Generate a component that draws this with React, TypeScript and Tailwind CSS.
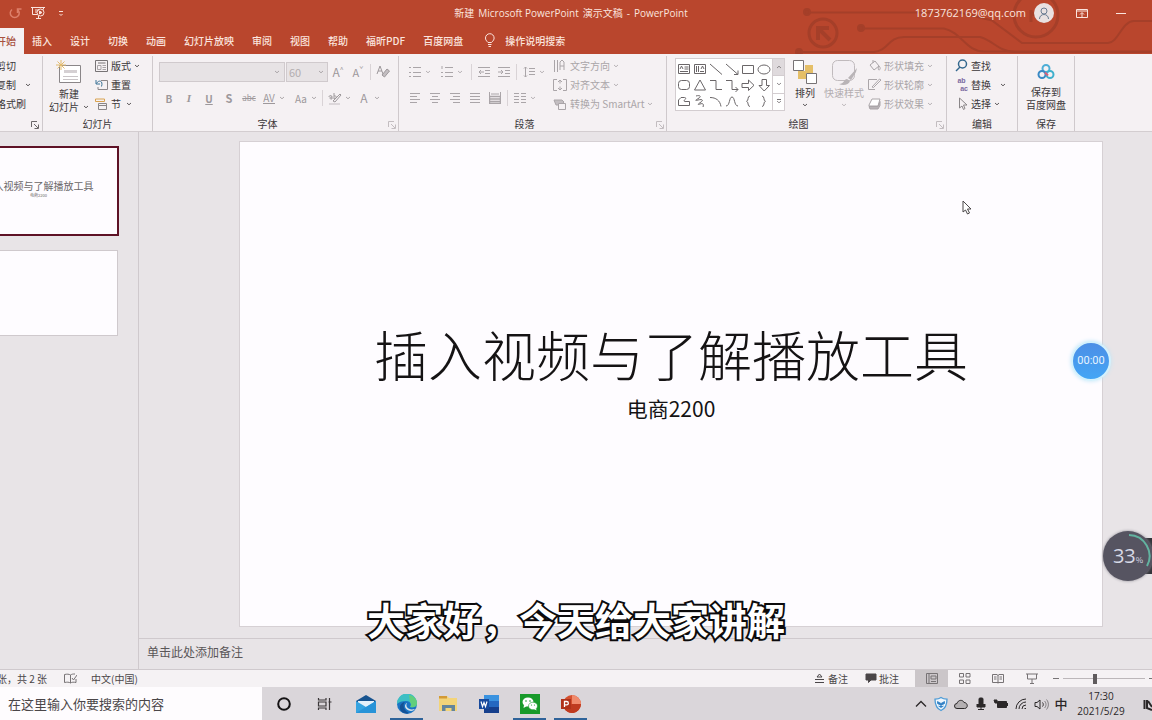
import type { ReactNode } from "react";
import { clsx } from "clsx";

const menuTabs = ["插入", "设计", "切换", "动画", "幻灯片放映", "审阅", "视图", "帮助", "福昕PDF", "百度网盘"];

function Caret({ className }: { className?: string }) {
  return (
    <svg viewBox="0 0 6 4" className={clsx("h-1 w-[6px] shrink-0 opacity-80", className)} fill="none" stroke="currentColor">
      <path d="M1 1l2 1.800L5 1" />
    </svg>
  );
}

type IconProps = { w?: number; h?: number; className?: string; children: ReactNode };

function Icon({ w = 16, h = 16, className, children }: IconProps) {
  return (
    <svg
      width={w}
      height={h}
      viewBox={`0 0 ${w} ${h}`}
      className={clsx("shrink-0", className)}
      fill="none"
      stroke="currentColor"
    >
      {children}
    </svg>
  );
}

type GroupProps = {
  label: string;
  className?: string;
  bodyClassName?: string;
  launcher?: boolean;
  children: ReactNode;
};

function Group({ label, className, bodyClassName, launcher, children }: GroupProps) {
  return (
    <section className={clsx("relative flex shrink-0 flex-col border-r border-[#cfc9cc]", className)}>
      <div className={clsx("flex h-[61px] items-start", bodyClassName)}>{children}</div>
      <h2 className={clsx("h-[14px] text-center text-[10px] leading-[14px] text-[#3b3739]", launcher && "pr-4")}>
        {label}
      </h2>
      {launcher && (
        <button aria-label={`${label}设置`} className="absolute right-[2px] bottom-[2px] text-[#c3bdc0]">
          <Icon w={8} h={8}>
            <path d="M.5 6V.5H6M3 3l4 4M7.500 3.500v4h-4" />
          </Icon>
        </button>
      )}
    </section>
  );
}

type RowProps = { icon?: ReactNode; text: string; caret?: boolean; gap?: string };

function RowButton({ icon, text, caret, gap }: RowProps) {
  return (
    <button className="flex h-[19px] items-center gap-[3px] whitespace-nowrap">
      {icon}
      <span>{text}</span>
      {caret && <Caret className={gap} />}
    </button>
  );
}

function Tool({ label, children }: { label: string; children: ReactNode }) {
  return (
    <button aria-label={label} className="flex h-5 w-5 items-center justify-center">
      {children}
    </button>
  );
}

function Divider() {
  return <span className="mx-[2px] h-4 w-px bg-[#d9d3d6]" />;
}

const alignments = [
  { label: "左对齐", d: "M1 1.500h10M1 4.500h7M1 7.500h10M1 10.500h7" },
  { label: "居中", d: "M1 1.500h10M3 4.500h6M1 7.500h10M3 10.500h6" },
  { label: "右对齐", d: "M1 1.500h10M4 4.500h7M1 7.500h10M4 10.500h7" },
  { label: "两端对齐", d: "M1 1.500h10M1 4.500h10M1 7.500h10M1 10.500h10" },
];

const shapes: { label: string; art: ReactNode }[] = [
  { label: "文本框", art: <path d="M2.500 3.500h11v9h-11zM4 8l1.500-3L7 8M8.500 6h4M8.500 8h4M4 10.500h8" /> },
  { label: "竖排文本框", art: <path d="M2.500 3.500h11v9h-11zM9 8l1.500-3L12 8M4.500 5v6M6.500 5v6M8 10.500h4" /> },
  { label: "直线", art: <path d="M2 3l12 10.500" /> },
  { label: "箭头", art: <path d="M2 3l12 10.500M14 9.500v4h-4" /> },
  { label: "矩形", art: <path d="M2.500 4.500h11v8h-11z" /> },
  { label: "椭圆", art: <ellipse cx="8" cy="8.500" rx="6" ry="4.500" /> },
  { label: "圆角矩形", art: <rect x="2.500" y="3.500" width="11" height="9" rx="3" /> },
  { label: "三角形", art: <path d="M8 3l5.500 10h-11z" /> },
  { label: "肘形连接符", art: <path d="M2 3.500h6v9h6" /> },
  { label: "肘形箭头", art: <path d="M2 3.500h6v9h6M11.500 10l2.500 2.500-2.500 2.500" /> },
  { label: "右箭头", art: <path d="M2 6.500h6.500V3l5.500 5.300-5.500 5.200V10.500H2z" /> },
  { label: "下箭头", art: <path d="M6 2.500h4.500v6H13.500L8.200 14 3 8.500h3z" /> },
  { label: "任意多边形", art: <path d="M2.500 12.500V7L5 4.500h3.500c2 0 1 2 0 2.500-1 1 0 2 1.500 1.500h3.500v4z" /> },
  { label: "自由曲线", art: <path d="M4 3c3-1 6 0 3 2s-5 3-1 2 6 0 3 2-4 3-1 2 4 0 3 3" /> },
  { label: "弧形", art: <path d="M2 4.500c6 0 10 3 11 9" /> },
  { label: "曲线", art: <path d="M2 13c4 0 3-9 6-9s2 9 6 9" /> },
  { label: "左大括号", art: <path d="M10 3C7 3 9 8 6.500 8.300 9 8.500 7 13.500 10 13.500" /> },
  { label: "右大括号", art: <path d="M6 3c3 0 1 5 3.500 5.300C7 8.500 9 13.500 6 13.500" /> },
];

function TitleBar() {
  return (
    <header className="relative bg-[#b9462d] text-[10px] text-[#fbe4de]">
      {/* Circuit decoration */}
      <svg className="absolute top-0 right-0 h-[54px] w-[362px]" fill="none" stroke="#a53f29" strokeWidth="2">
        <circle cx="17" cy="12" r="3" fill="#a53f29" />
        <path d="M20 12.500h150l32 8 30 22.500h86c10 0 14-22 26-22h18" />
        <circle cx="33" cy="33" r="14" strokeWidth="3" />
        <path d="M28 40V28h11M28 28l12 12" strokeWidth="4" />
        <circle cx="71" cy="28" r="3" fill="#a53f29" />
        <path d="M74 28.500h80c18 4 22 23 40 23h168" />
        <circle cx="9" cy="52" r="3" fill="#a53f29" />
        <path d="M12 52h72c14-1 14-15 30-15h76c14 4 18 14 34 15h138" />
        <circle cx="246" cy="15" r="22" strokeWidth="3" />
        <path d="M241 22V10M241 12l12 10" strokeWidth="3" />
      </svg>

      <div className="relative flex h-7 items-center pb-[2px]">
        <div className="flex flex-1 items-center pl-2">
          <button aria-label="恢复" className="text-[#dd7f6a]">
            <Icon w={14} h={14}>
              <path d="M4 3.500a4.500 4.500 0 1 0 5.500 0M9.500 7V3h4" strokeWidth="1.500" />
            </Icon>
          </button>
          <button aria-label="从头开始放映" className="ml-2">
            <Icon>
              <path d="M1 2.500h14M2.500 2.500v7h5M13.500 2.500v2M5 5h4M5 7h2M6 13.500h5M8.500 11v2" />
              <circle cx="10.500" cy="7.500" r="3.500" />
              <path d="M9.500 6v3l2.500-1.500z" fill="currentColor" />
            </Icon>
          </button>
          <button aria-label="自定义快速访问工具栏" className="ml-3">
            <Icon w={6} h={8}>
              <path d="M1 2.500h4M1.500 5L3 6.500 4.500 5" />
            </Icon>
          </button>
        </div>
        <h1 className="flex gap-1 pl-2 font-['Open_Sans','Noto_Sans_CJK_SC',sans-serif]">
          <span>新建</span>
          <span>Microsoft PowerPoint</span>
          <span>演示文稿</span>
          <span>-</span>
          <span>PowerPoint</span>
        </h1>
        <div className="flex flex-1 items-center justify-end pr-[26px]">
          <span className="font-['Open_Sans',sans-serif] text-[11px]">1873762169@qq.com</span>
          <button aria-label="账户" className="ml-2 flex size-5 items-center justify-center rounded-full bg-[#e9e1e1] text-[#6a7c92]">
            <Icon w={14} h={14}>
              <circle cx="7" cy="5" r="3" />
              <path d="M2.500 13c0-6 9-6 9 0" />
            </Icon>
          </button>
          <button aria-label="功能区显示选项" className="ml-[22px]">
            <Icon w={12} h={10}>
              <path d="M.5 1.500h11v8H.5zM.5 3h11M6 9V5M4 6.500L6 4.500l2 2" />
            </Icon>
          </button>
          <button aria-label="最小化" className="ml-7 flex h-4 w-[10px] items-center">
            <span className="h-px w-full bg-current" />
          </button>
        </div>
      </div>

      <nav className="relative flex h-[26px] items-center font-medium">
        <a href="#home" className="flex h-full w-6 items-center bg-[#f5f1f3] pb-[2px] whitespace-nowrap text-[#a8513f]">
          <span className="-ml-1">开始</span>
        </a>
        <div className="ml-2 flex gap-[18px] pb-[2px]">
          {menuTabs.map((tab) => (
            <a key={tab} href={`#${tab}`}>
              {tab}
            </a>
          ))}
        </div>
        <button className="ml-5 flex items-center gap-2 pb-[2px]">
          <Icon w={14} h={14}>
            <path d="M5 9.500C3 7.500 2.500 6.500 2.500 5a4.300 4.300 0 0 1 8.600 0c0 1.500-.6 2.500-2.600 4.500zM5 11.500h3.500M5.500 13.500h2.500" />
          </Icon>
          操作说明搜索
        </button>
      </nav>
    </header>
  );
}

function Ribbon() {
  return (
    <div className="flex h-[78px] overflow-hidden border-b border-[#d3cdd0] bg-[#f5f1f3] pt-[2px] text-[10px] text-[#3b3739]">
      <section className="relative w-[43px] shrink-0 overflow-hidden border-r border-[#cfc9cc]">
        <div className="-ml-1">
          <RowButton text="剪切" />
          <RowButton text="复制" caret gap="ml-[6px]" />
          <RowButton text="格式刷" />
        </div>
        <button aria-label="剪贴板设置" className="absolute right-[3px] bottom-[2px] text-[#6b6769]">
          <Icon w={8} h={8}>
            <path d="M.5 6V.5H6M3 3l4 4M7.500 3.500v4h-4" />
          </Icon>
        </button>
      </section>

      <Group label="幻灯片" className="w-[110px]" bodyClassName="pl-[6px]">
        <button className="flex flex-col items-center pt-1 leading-[13px]">
          <Icon w={26} h={25}>
            <path d="M3.500 5.500h21v17h-21z" fill="#fff" stroke="#8a8688" />
            <path d="M8 10h13v3H8z" fill="#d5d0d3" stroke="none" />
            <path d="M7 16.500h15M7 19.500h15" stroke="#c9c4c7" />
            <path d="M5 0v10M0 5h10M1.500 1.500l7 7M8.500 1.500l-7 7" stroke="#e3bb6c" />
          </Icon>
          <span className="mt-[2px]">新建</span>
          <span className="flex items-center gap-1">
            幻灯片 <Caret />
          </span>
        </button>
        <div className="ml-[6px]">
          <RowButton
            text="版式"
            caret
            icon={
              <Icon w={13} h={12}>
                <path d="M.5.5h12v11H.5zM3 3h7.500" stroke="#777375" />
                <path d="M2.500 5.500h3.500v4H2.500zM7.500 5.500H11M7.500 7.500H11M7.500 9.500H11" stroke="#a9a4a7" />
              </Icon>
            }
          />
          <RowButton
            text="重置"
            icon={
              <Icon w={13} h={12}>
                <path d="M6 1.500h6.500v9H3V8" stroke="#8a8688" />
                <path d="M1 1v4h4M1.500 4.500c2-4 7-3 5 3" stroke="#3b7396" />
              </Icon>
            }
          />
          <RowButton
            text="节"
            caret
            gap="ml-[2px]"
            icon={
              <Icon w={13} h={12}>
                <path d="M.5 1v2.500h9V1z" stroke="#d9a24e" />
                <path d="M3.500 5.500h8v6h-8zM3.500 7.500h8" stroke="#8a8688" />
              </Icon>
            }
          />
        </div>
      </Group>

      <Group label="字体" className="w-[246px]" bodyClassName="pl-[6px]" launcher>
        <div className="text-[#9d989b]">
          <div className="mt-[6px] flex h-5 items-center">
            <select aria-label="字体名称" className="h-5 w-[126px] appearance-none border border-[#d0cacd] bg-[#e7e3e5]" />
            <Caret className="-ml-[11px] mr-[6px]" />
            <select aria-label="字号" className="h-5 w-[42px] appearance-none border border-[#d0cacd] bg-[#e7e3e5] pl-[2px] text-[11px] leading-4 text-[#b3adb0]">
              <option>60</option>
            </select>
            <Caret className="-ml-[10px] mr-1" />
            <Tool label="增大字号">
              <span className="text-xs">A</span>
              <sup className="text-[7px]">^</sup>
            </Tool>
            <Tool label="减小字号">
              <span className="text-[11px]">A</span>
              <sup className="text-[7px]">ˇ</sup>
            </Tool>
            <Divider />
            <Tool label="清除格式">
              <Icon w={14} h={14}>
                <path d="M1 9l3-8 3 8M2 6h4" />
                <path d="M6 10l5-6 2.500 2-5 6z" fill="#c3bec1" />
              </Icon>
            </Tool>
          </div>
          <div className="mt-[6px] flex h-5 items-center">
            <Tool label="加粗">
              <b>B</b>
            </Tool>
            <Tool label="倾斜">
              <i className="font-['Liberation_Serif',serif] text-[11px] font-bold">I</i>
            </Tool>
            <Tool label="下划线">
              <b className="underline">U</b>
            </Tool>
            <Tool label="文字阴影">
              <b className="text-[11px]">S</b>
            </Tool>
            <Tool label="删除线">
              <s className="text-[8px]">abc</s>
            </Tool>
            <Tool label="字符间距">
              <span className="border-b border-current leading-[10px]">AV</span>
            </Tool>
            <Caret className="mr-[6px]" />
            <Tool label="更改大小写">Aa</Tool>
            <Caret className="mr-[3px]" />
            <Divider />
            <Tool label="突出显示颜色">
              <Icon w={14} h={14}>
                <path d="M1 6c0-2 3-2 3 0v2c-3 0-3-2 0-2M6 2v6c3 0 3-4 0-3M5 10l7-7 1 1-6 7z" />
                <path d="M1 13h11" stroke="#dcd7da" strokeWidth="2" />
              </Icon>
            </Tool>
            <Caret className="mr-[3px]" />
            <Tool label="字体颜色">
              <span className="text-xs">A</span>
            </Tool>
            <Caret />
          </div>
        </div>
      </Group>

      <Group label="段落" className="w-[268px]" bodyClassName="pl-[6px]" launcher>
        <div className="w-[148px] text-[#aaa5a8]">
          <div className="mt-[6px] flex h-5 items-center">
            <Tool label="项目符号">
              <Icon w={12} h={12}>
                <path d="M0 1.500h2M0 6.500h2M0 10.500h2M4 1.500h8M4 6.500h8M4 10.500h8" />
              </Icon>
            </Tool>
            <Caret className="mr-[6px]" />
            <Tool label="编号">
              <Icon w={12} h={12}>
                <path d="M1 0v3M0 6.500h2M0 10.500h2M4 1.500h8M4 6.500h8M4 10.500h8" />
              </Icon>
            </Tool>
            <Caret className="mr-[6px]" />
            <Divider />
            <Tool label="减少缩进">
              <Icon w={12} h={12}>
                <path d="M0 1.500h12M7 4.500h5M7 7.500h5M0 10.500h12M6 6H1M3 4L1 6l2 2" />
              </Icon>
            </Tool>
            <Tool label="增加缩进">
              <Icon w={12} h={12}>
                <path d="M0 1.500h12M7 4.500h5M7 7.500h5M0 10.500h12M0 6h5M3 4l2 2-2 2" />
              </Icon>
            </Tool>
            <Divider />
            <Tool label="行距">
              <Icon w={12} h={12}>
                <path d="M2.500 1v10M1 2.500L2.500 1 4 2.500M1 9.500L2.500 11 4 9.500M6 2.500h6M6 5.500h6M6 8.500h6" />
              </Icon>
            </Tool>
            <Caret />
          </div>
          <div className="mt-[6px] flex h-5 items-center">
            {alignments.map((a) => (
              <Tool key={a.label} label={a.label}>
                <Icon w={12} h={12}>
                  <path d={a.d} />
                </Icon>
              </Tool>
            ))}
            <Tool label="分散对齐">
              <Icon w={12} h={12}>
                <path d="M.5 0v4M11.500 0v4M2 2h8" />
                <path d="M.5 4.500h11v7H.5zM1 7h10M1 9.500h10" strokeWidth="1.500" />
              </Icon>
            </Tool>
            <Divider />
            <Tool label="分栏">
              <Icon w={12} h={12}>
                <path d="M0 1.500h5M0 4.500h5M0 7.500h5M0 10.500h5M7 1.500h5M7 4.500h5M7 7.500h5M7 10.500h5" />
              </Icon>
            </Tool>
            <Caret />
          </div>
        </div>
        <div className="text-[#aaa5a8]">
          <RowButton
            text="文字方向"
            caret
            icon={
              <Icon w={14} h={14}>
                <path d="M1.500 1v12M4.500 1v12M7 11V3l2-2 2 2v8M7 7h4" />
              </Icon>
            }
          />
          <RowButton
            text="对齐文本"
            caret
            icon={
              <Icon w={14} h={14}>
                <path d="M4 1.500H.5v11H4M10 1.500h3.500v11H10M7 2v3.500M7 8.500V12M5 4l2-2 2 2M5 10l2 2 2-2" />
              </Icon>
            }
          />
          <RowButton
            text="转换为 SmartArt"
            caret
            icon={
              <Icon w={14} h={14}>
                <path d="M1 3h8l2 2-3 3H3z" fill="#c3bec1" />
                <path d="M5.500 6.500h7v6h-7z" fill="#f5f1f3" />
              </Icon>
            }
          />
        </div>
      </Group>

      <Group label="绘图" className="w-[280px]" bodyClassName="pl-2" launcher>
        <div className="mt-[2px] flex h-[53px] border border-[#d3cdd0] bg-white">
          <div className="grid grid-cols-6 content-center text-[#6a6668]">
            {shapes.map((s) => (
              <button key={s.label} aria-label={s.label}>
                <Icon>{s.art}</Icon>
              </button>
            ))}
          </div>
          <div className="flex w-3 flex-col divide-y divide-[#d3cdd0] border-l border-[#d3cdd0] text-[#777375]">
            <button aria-label="上一行" className="flex flex-1 items-center justify-center bg-[#dfdadd]">
              <Caret className="rotate-180 opacity-40" />
            </button>
            <button aria-label="下一行" className="flex flex-1 items-center justify-center">
              <Caret />
            </button>
            <button aria-label="其他形状" className="flex flex-1 flex-col items-center justify-center">
              <span className="h-px w-1 bg-current" />
              <Caret />
            </button>
          </div>
        </div>
        <button className="ml-[6px] flex w-7 flex-col items-center pt-[3px]">
          <Icon w={26} h={25}>
            <path d="M13 6h8v8h-8zM6 12h8v8H6z" fill="#e5bf68" stroke="none" />
            <path d="M1.500 1.500h10v10h-10zM14.500 14.500h10v10h-10z" fill="#fff" stroke="#777375" />
          </Icon>
          <span className="mt-[2px] leading-[13px]">排列</span>
          <Caret className="mt-1" />
        </button>
        <button className="ml-1 flex w-[42px] flex-col items-center pt-[3px] text-[#b3adb0]">
          <Icon w={26} h={27}>
            <rect x="1.500" y="1.500" width="22" height="20" rx="5" fill="#f3eff3" stroke="#c0babd" />
            <path d="M26 9L17 19l3 2 5-8zM16 20c-3 0-3 5-8 5 4 2 10 1 11-3z" fill="#b9b4b7" stroke="none" />
          </Icon>
          <span className="leading-[13px]">快速样式</span>
          <Caret className="mt-1" />
        </button>
        <div className="ml-[3px] text-[#aaa5a8]">
          <RowButton
            text="形状填充"
            caret
            icon={
              <Icon w={13} h={13}>
                <path d="M2 6l5-4 4 5-5 4zM5 4V1M11 7c2 2 1 4 0 4s-1-2 0-4" />
              </Icon>
            }
          />
          <RowButton
            text="形状轮廓"
            caret
            icon={
              <Icon w={13} h={13}>
                <path d="M9 1.500H.5v10H7M4 9l7.500-8L13 2 5.500 9.500z" />
              </Icon>
            }
          />
          <RowButton
            text="形状效果"
            caret
            icon={
              <Icon w={13} h={13}>
                <path d="M1 8l3-6h8l-2 7H1z" fill="#fff" />
                <path d="M1 9.500h9l2-5v4L10 12H2z" fill="#b9b4b7" />
              </Icon>
            }
          />
        </div>
      </Group>

      <Group label="编辑" className="w-[71px]" bodyClassName="pl-2">
        <div>
          <RowButton
            text="查找"
            icon={
              <Icon w={13} h={13} className="text-[#34688e]">
                <circle cx="7.500" cy="5" r="4" strokeWidth="1.500" />
                <path d="M5 8l-4 4" strokeWidth="1.500" />
              </Icon>
            }
          />
          <RowButton
            text="替换"
            caret
            gap="ml-[6px]"
            icon={
              <span className="flex w-[13px] flex-col font-['Liberation_Sans',sans-serif] text-[7px] leading-[8px] font-bold text-[#7a68a0]">
                <span>ab</span>
                <span className="text-right">ac</span>
              </span>
            }
          />
          <RowButton
            text="选择"
            caret
            icon={
              <Icon w={13} h={13}>
                <path d="M4.500 1v10l2.500-2 1.500 3.500 1.500-1L8.500 8H12z" stroke="#8a8688" />
              </Icon>
            }
          />
        </div>
      </Group>

      <Group label="保存" className="w-[57px]">
        <button className="flex flex-1 flex-col items-center pt-2 leading-[13px]">
          <Icon w={18} h={16} className="mb-[5px]">
            <circle cx="9" cy="4.500" r="3.500" stroke="#4eaed6" strokeWidth="2" />
            <circle cx="5" cy="10.500" r="3.500" stroke="#3989c4" strokeWidth="2" />
            <circle cx="13" cy="10.500" r="3.500" stroke="#3fb0cd" strokeWidth="2" />
            <path d="M8 8.500l3 3" stroke="#d65f7c" strokeWidth="2" />
          </Icon>
          <span>保存到</span>
          <span>百度网盘</span>
        </button>
      </Group>
    </div>
  );
}

function Workspace() {
  return (
    <main className="flex min-h-0 flex-1 bg-[#e8e4e7]">
      <aside className="w-[139px] shrink-0 overflow-hidden border-r border-[#cfc9cd] pt-[14px]">
        <button className="-ml-[42px] flex h-[90px] w-[161px] flex-col items-center justify-center border-2 border-[#5e1226] bg-[#fefcff] pb-[6px] whitespace-nowrap text-[#6a6668]">
          <span className="text-[10px] leading-[14px]">插入视频与了解播放工具</span>
          <span className="text-[4px] leading-[5px]">电商2200</span>
        </button>
        <button
          aria-label="幻灯片 2"
          className="mt-[14px] -ml-9 block h-[86px] w-[154px] border border-[#cfc9cd] bg-[#fefcff]"
        />
      </aside>

      <div className="flex min-w-0 flex-1 flex-col">
        <div className="flex-1 pt-[9px] pr-[49px] pl-[100px]">
          <article className="flex aspect-video flex-col items-center justify-center border border-[#d6d0d4] bg-[#fefcff] text-[#151314]">
            <h2 className="text-[54px] leading-[72px] font-light whitespace-nowrap">插入视频与了解播放工具</h2>
            <p className="mb-6 text-[21px] leading-9">电商2200</p>
          </article>
        </div>
        <label className="flex h-[31px] items-center border-t border-[#cfc9cd] pb-1 pl-2">
          <input
            aria-label="备注"
            placeholder="单击此处添加备注"
            className="w-full bg-transparent text-xs text-[#5a5658] outline-none placeholder:text-[#5a5658]"
          />
        </label>
      </div>
    </main>
  );
}

function StatusBar() {
  return (
    <footer className="flex h-[18px] shrink-0 items-center overflow-hidden border-t border-[#cfc9cd] bg-[#f5f2f4] text-[10px] text-[#4a4648]">
      <span className="-ml-[3px] whitespace-nowrap">张，共 2 张</span>
      <button aria-label="拼写检查" className="ml-[17px] text-[#777375]">
        <Icon w={13} h={11}>
          <path d="M6.500 2v8M6.500 2C5 1 3 1 .5 1.500v8c2.500-.5 4.500-.5 6 .5 1.500-1 3-1 5.500-.5V6M6.500 2C8 1 9 1 11 1M8 5l1.500 2L13 2" />
        </Icon>
      </button>
      <span className="ml-[14px]">中文(中国)</span>
      <div className="ml-auto flex h-full items-center">
        <button className="flex items-center gap-1">
          <Icon w={9} h={10}>
            <path d="M4.500 0L7 3H2zM0 5.500h9M0 8.500h9" />
          </Icon>
          备注
        </button>
        <button className="ml-[17px] flex items-center gap-[2px]">
          <Icon w={12} h={11}>
            <path d="M1 1h10v6H6L3.500 9.500V7H1z" fill="currentColor" />
          </Icon>
          批注
        </button>
        <div className="ml-4 flex h-full text-[#777375]">
          <button aria-label="普通视图" className="flex w-[33px] items-center justify-center bg-[#cbc6c9]">
            <Icon w={12} h={11}>
              <path d="M.5.5h11v10H.5zM3 .5v10M5 3h5v3H5zM5 8.500h5" />
            </Icon>
          </button>
          <button aria-label="幻灯片浏览" className="flex w-[33px] items-center justify-center">
            <Icon w={12} h={11}>
              <path d="M.5.5h4v3.500h-4zM7 .5h4v3.500H7zM.5 7h4v3.500h-4zM7 7h4v3.500H7z" />
            </Icon>
          </button>
          <button aria-label="阅读视图" className="flex w-[34px] items-center justify-center">
            <Icon w={12} h={11}>
              <path d="M6 1.500v9M.5 1.500H5l1 1 1-1h4.500v8H.5zM2 4h2.500M2 6h2.500M7.500 4H10M7.500 6H10" />
            </Icon>
          </button>
          <button aria-label="幻灯片放映" className="flex w-[33px] items-center justify-center">
            <Icon w={12} h={11}>
              <path d="M0 1h12M1.500 1v5h9V1M6 6v4M4 10.500h4" />
            </Icon>
          </button>
        </div>
        <button aria-label="缩小" className="ml-[5px] h-px w-[6px] bg-[#777375]" />
        <input
          type="range"
          aria-label="缩放"
          min={0}
          max={100}
          defaultValue={39}
          className="ml-1 h-3 w-[82px] appearance-none bg-[linear-gradient(#bcb7ba,#bcb7ba)] bg-[length:100%_1px] bg-center bg-no-repeat [&::-webkit-slider-thumb]:h-[10px] [&::-webkit-slider-thumb]:w-1 [&::-webkit-slider-thumb]:appearance-none [&::-webkit-slider-thumb]:bg-[#5f5b5d]"
        />
        <button aria-label="放大" className="ml-1 h-px w-[3px] bg-[#777375]" />
      </div>
    </footer>
  );
}

const apps: { name: string; active?: boolean; art: ReactNode }[] = [
  { name: "Cortana", art: <circle cx="10" cy="10" r="5.800" stroke="#151314" strokeWidth="2" /> },
  {
    name: "任务视图",
    art: (
      <path
        d="M3.500 4v2h7.500V4M3.500 16v-2h7.500v2M3.500 8h7.500v4H3.500zM14.500 4v12M13.500 8h3"
        stroke="#3b3739"
        strokeWidth="1.200"
      />
    ),
  },
  {
    name: "邮件",
    art: (
      <g stroke="none">
        <path d="M0 7l10-6 10 6v3H0z" fill="#17538f" />
        <path d="M2 7h16v7H2z" fill="#e4f0fa" />
        <path d="M0 7l10 6 10-6v12H0z" fill="#35a3e0" />
        <path d="M0 19l10-6L20 7v12z" fill="#2793d8" />
      </g>
    ),
  },
  {
    name: "Microsoft Edge",
    active: true,
    art: (
      <g stroke="none">
        <circle cx="10" cy="10" r="10" fill="#1b74c4" />
        <path d="M0 10A10 10 0 0 1 20 9c0 4-3 5-7 4 2-3 0-6-4-6C5 7 2 8 0 10z" fill="#3dbfc4" />
        <path d="M12 1c5 1 8 4 8 8s-4 5-7 4c2-2 1-4 0-5z" fill="#62cf7c" />
        <path d="M8 8c-3 3-1 9 4 11-5 2-10-2-9-7 .5-2 3-4 5-4z" fill="#155296" />
        <path d="M10 9c-2 3 1 8 8 6-3 4-10 1-10-3 0-1 1-3 2-3z" fill="#d9e3ea" />
      </g>
    ),
  },
  {
    name: "文件资源管理器",
    art: (
      <g stroke="none">
        <path d="M1 2h8l2 2h8v13H1z" fill="#f3d479" />
        <path d="M1 2h8v2.500H1z" fill="#d39a36" />
        <path d="M4 17v-6h13v6h-3.500v-3h-6v3z" fill="#64859c" />
      </g>
    ),
  },
  {
    name: "Word",
    art: (
      <g stroke="none">
        <path d="M5 1h15v6H5z" fill="#3b93e0" />
        <path d="M5 7h15v6H5z" fill="#2568c0" />
        <path d="M5 13h15v6H5z" fill="#163f8c" />
        <path d="M0 5h10v10H0z" fill="#184a9c" />
        <path d="M2 7.500l1.500 5L5 8.500l1.500 4L8 7.500" fill="none" stroke="#fff" strokeWidth="1.200" />
      </g>
    ),
  },
  {
    name: "微信",
    active: true,
    art: (
      <g stroke="none">
        <path d="M0 0h20v20H0z" fill="#189a2a" />
        <ellipse cx="8" cy="8" rx="5.500" ry="4.500" fill="#fff" />
        <path d="M4 11l-.5 3L7 12z" fill="#fff" />
        <ellipse cx="13" cy="12" rx="4.500" ry="3.800" fill="#fff" stroke="#189a2a" strokeWidth=".6" />
        <path d="M14 15l2.500 1.500L16 14z" fill="#fff" />
        <g fill="#189a2a">
          <circle cx="6" cy="7" r=".8" />
          <circle cx="10" cy="7" r=".8" />
          <circle cx="11.500" cy="11" r=".6" />
          <circle cx="14.500" cy="11" r=".6" />
        </g>
      </g>
    ),
  },
  {
    name: "PowerPoint",
    active: true,
    art: (
      <g stroke="none">
        <circle cx="11" cy="10" r="9" fill="#d4502f" />
        <path d="M11 1a9 9 0 0 1 9 9h-9z" fill="#f08a6c" />
        <path d="M2.500 13A9 9 0 0 0 20 10H11z" fill="#bf3a1f" />
        <path d="M0 5h10v10H0z" fill="#b0321a" />
        <path d="M3.500 13V7.500h2.200a1.600 1.600 0 0 1 0 3.300H3.500" fill="none" stroke="#fff" strokeWidth="1.300" />
      </g>
    ),
  },
];

const tray: { name: string; art: ReactNode }[] = [
  { name: "显示隐藏的图标", art: <path d="M3 10.500l5-5 5 5" strokeWidth="1.300" /> },
  {
    name: "安全中心",
    art: (
      <>
        <path d="M8 1.500c2 1.500 4 1.700 6 1.700 0 6-2 9.500-6 11.300C4 12.700 2 9.200 2 3.200c2 0 4-.2 6-1.700z" fill="#eef6fc" stroke="#4c9bd6" strokeWidth="1.300" />
        <path d="M4.500 5.500L8 7.500l3.500-2v2L8 9.500l-3.500-2zM5.500 10L8 11.500l2.500-1.500" fill="#2f7fc4" stroke="#2f7fc4" strokeWidth=".8" />
      </>
    ),
  },
  { name: "OneDrive", art: <path d="M4 12.500a2.500 2.500 0 0 1 0-5c1-4 6-4 7-1 4 0 4.500 6 .5 6z" fill="#b4b0b2" /> },
  {
    name: "麦克风",
    art: (
      <g fill="currentColor">
        <rect x="6" y="2" width="4" height="8" rx="1" />
        <path d="M4 8v3h8V8M8 11v2.500M5 13.500h6" />
      </g>
    ),
  },
  { name: "电池", art: <path d="M4.500 5.500h9v6h-9zM14.500 7v3M1 4h3v3H2z" fill="currentColor" /> },
  { name: "WLAN", art: <path d="M3 13A10 10 0 0 1 13 3M6 13a7 7 0 0 1 7-7M9 13a4 4 0 0 1 4-4M11.500 12.500h1.500" /> },
  {
    name: "音量",
    art: (
      <>
        <path d="M2 6.500h2L7 4v9L4 10.500H2zM9.500 6.500c1 1 1 3 0 4" />
        <path d="M11.500 5c2 2 2 5 0 7M13.500 3.500c2.500 3 2.500 7 0 10" opacity=".5" />
      </>
    ),
  },
];

function Taskbar() {
  return (
    <div className="flex h-[33px] shrink-0 overflow-hidden bg-[#dad6da] text-[#2b2829]">
      <input
        aria-label="搜索"
        placeholder="在这里输入你要搜索的内容"
        className="w-[262px] shrink-0 bg-[#fefcfe] pl-2 text-[13px] outline-none placeholder:text-[#4a4648]"
      />
      <div className="flex pl-px">
        {apps.map((app) => (
          <button key={app.name} aria-label={app.name} className="relative flex w-[41px] items-center justify-center">
            <Icon w={20} h={20}>
              {app.art}
            </Icon>
            {app.active && <span className="absolute inset-x-1 bottom-0 h-[2px] bg-[#2f6399]" />}
          </button>
        ))}
      </div>
      <div className="ml-auto flex items-center">
        {tray.map((t) => (
          <button key={t.name} aria-label={t.name} className="flex w-5 justify-center">
            <Icon>{t.art}</Icon>
          </button>
        ))}
        <button className="w-5 text-[13px] font-medium">中</button>
        <button className="w-[60px] text-center font-['Open_Sans',sans-serif] text-[10px] leading-[15px]">
          17:30
          <br />
          2021/5/29
        </button>
        <button aria-label="通知" className="ml-3">
          <Icon w={9} h={14}>
            <path d="M1.500 3v9M4 3v8l5 2M5 4l4 6" strokeWidth="2" />
          </Icon>
        </button>
      </div>
    </div>
  );
}

export default function App() {
  return (
    <div className="relative flex h-screen flex-col overflow-hidden font-['Noto_Sans_CJK_SC',sans-serif]">
      <TitleBar />
      <Ribbon />
      <Workspace />
      <StatusBar />
      <Taskbar />

      {/* Mouse pointer */}
      <svg viewBox="0 0 10 15" className="absolute top-[200px] right-[180px] h-[15px] w-[10px]" fill="#fff" stroke="#4a4648">
        <path d="M1 1v11l2.500-2 2 4 2-1-2-4H9z" />
      </svg>

      {/* Recording timer */}
      <div className="absolute top-[341px] right-[41px] flex size-10 items-center justify-center rounded-full border-2 border-[#d3f1fd] bg-linear-to-b from-[#4c8fe6] to-[#43a5f5] font-['Roboto',sans-serif] text-[11px] text-[#e6f4ff] shadow-[0_0_4px_#bfe6f7]">
        00:00
      </div>

      {/* Memory usage ball */}
      <div className="absolute top-[538px] right-0 h-9 w-6 bg-[#33343a]" />
      <div className="absolute -right-px top-[531px] flex size-[50px] items-center justify-center rounded-full bg-[#565461] text-[#d7d9e6] shadow-[0_0_3px_#8a8890]">
        <svg viewBox="0 0 50 50" className="absolute inset-0" fill="none" stroke="#62b3a0" strokeWidth="2">
          <path d="M26 4a21 21 0 0 1 18 31" />
        </svg>
        <span className="font-['Open_Sans',sans-serif] text-xl">33</span>
        <span className="mt-2 text-[8px]">%</span>
      </div>

      {/* Caption */}
      <p className="absolute inset-x-0 top-[591px] text-center text-[38px] leading-[56px] font-bold whitespace-nowrap text-white [-webkit-text-stroke:4px_#0c0b0c] [paint-order:stroke_fill]">
        大家好，今天给大家讲解
      </p>
    </div>
  );
}
